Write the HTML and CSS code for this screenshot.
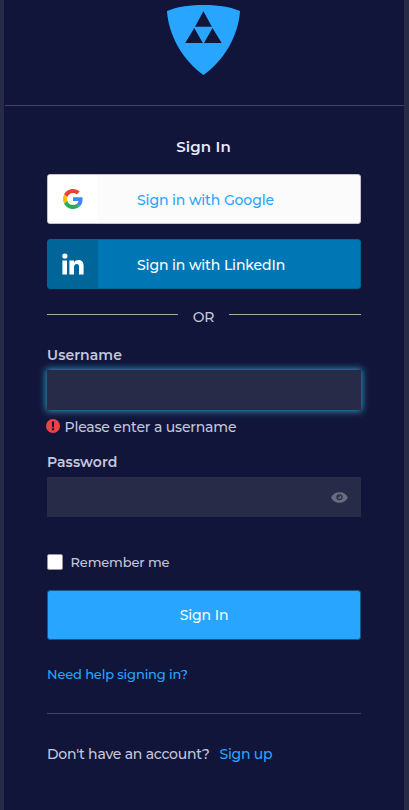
FILE: index.html
```html
<!DOCTYPE html>
<html lang="en">
<head>
<meta charset="utf-8">
<title>Sign In</title>
<link rel="stylesheet" href="styles.css">
</head>
<body>
<main class="panel">
  <header class="brand">
    <svg class="shield" width="74" height="72" viewBox="0 0 74 72"><path fill="#28a5ff" d="M0 7C11 2.300 24 1 36.400 1S62 2.300 73 7C71.500 32 56.500 57 36.400 71C16.500 57 1.500 32 0 7Z"/><path fill="#12153a" d="M36.400 7.300 44.900 22.800H28ZM27.300 24 35.800 39H18.200ZM45.500 24 54.700 39H37Z"/></svg>
  </header>
  <form class="form">
    <h1 class="title">Sign In</h1>
    <button type="button" class="social google">
      <span class="social-icon"><svg width="20" height="20" viewBox="0 0 48 48"><path fill="#ea4335" d="M24 9.500c3.540 0 6.710 1.220 9.210 3.600l6.850-6.850C35.900 2.380 30.470 0 24 0 14.620 0 6.510 5.380 2.560 13.220l7.980 6.190C12.430 13.720 17.740 9.500 24 9.500z"/><path fill="#4285f4" d="M46.980 24.550c0-1.570-.15-3.090-.38-4.550H24v9.020h12.940c-.58 2.960-2.260 5.480-4.780 7.180l7.730 6c4.510-4.180 7.090-10.360 7.090-17.650z"/><path fill="#fbbc05" d="M10.530 28.590a14.500 14.500 0 0 1 0-9.180l-7.980-6.190a24 24 0 0 0 0 21.560l7.980-6.190z"/><path fill="#2bad55" d="M24 48c6.480 0 11.930-2.130 15.890-5.810l-7.730-6c-2.150 1.450-4.920 2.300-8.160 2.300-6.260 0-11.570-4.220-13.470-9.910l-7.980 6.190C6.510 42.620 14.620 48 24 48z"/></svg></span>
      <span class="social-label">Sign in with Google</span>
    </button>
    <button type="button" class="social linkedin">
      <span class="social-icon"><svg width="22" height="22" viewBox="0 0 22 22" fill="#fff"><circle cx="2.900" cy="3" r="2.600"/><path d="M.4 7.500H5V21.400H.4ZM7.400 7.500H12V9.400C13 7.900 14.500 7.100 16.500 7.100C20.200 7.100 21.600 9.500 21.600 13.200V21.400H17V14.100C17 12.100 16.500 10.900 14.800 10.900C13 10.900 12 12.200 12 14.300V21.400H7.400Z"/></svg></span>
      <span class="social-label">Sign in with LinkedIn</span>
    </button>
    <div class="or"><i class="rule"></i><span class="or-text">OR</span><i class="rule"></i></div>
    <label class="label username-label" for="user">Username</label>
    <input class="field focused" id="user" type="text">
    <div class="error"><svg width="14" height="14" viewBox="0 0 14 14"><circle cx="7" cy="7" r="7" fill="#e94444"/><path fill="#12153a" d="M5.800 2.500H8.200L7.900 8.200H6.100ZM5.900 9.200H8.100V11.300H5.900Z"/></svg><span class="error-text">Please enter a username</span></div>
    <label class="label password-label" for="pass">Password</label>
    <div class="password"><input class="field bare" id="pass" type="password"><svg width="17" height="11" viewBox="0 0 16 11" preserveAspectRatio="none"><path fill="#696c7c" d="M0 5.500C1.700 2 4.500.3 8 .3S14.300 2 16 5.500C14.300 9 11.500 10.700 8 10.700S1.700 9 0 5.500Z"/><circle cx="8" cy="5.300" r="2.400" fill="none" stroke="#2a2d49" stroke-width="1.200"/><path fill="#2a2d49" d="M8 3.400V5.400H6C6 4.200 6.800 3.400 8 3.400Z"/></svg></div>
    <label class="remember"><input class="check" type="checkbox"><span class="remember-text">Remember me</span></label>
    <button type="button" class="submit">Sign In</button>
    <a class="help">Need help signing in?</a>
    <div class="signup"><span class="question">Don't have an account?</span><a class="join">Sign up</a></div>
  </form>
</main>
</body>
</html>
```
FILE: styles.css
```css
* { box-sizing: border-box; }
body { margin: 0; background: #282b48; font: 14px/20px "Montserrat", Inter, sans-serif; color: #c3c7dd; }
button { font: inherit; padding: 0; }
.panel { width: 400px; height: 810px; margin-left: 4px; background: #12153a; overflow: hidden; }
.brand { height: 106px; margin-left: 1px; padding: 4px 0 0 162px; border-bottom: 1px solid #41435f; }
.shield { display: block; }
.form { width: 314px; margin-left: 43px; display: flex; flex-direction: column; }
.title { margin: 31px 0 17px; height: 20px; text-align: center; font-size: 15px; line-height: 20px; font-weight: 600; letter-spacing: .15px; color: #e8eafa; padding-right: 1px; }
.social { display: flex; width: 314px; height: 50px; border: 1px solid #c3c3c6; border-radius: 3px; overflow: hidden; align-items: center; }
.social-icon { width: 50px; height: 48px; display: flex; align-items: center; justify-content: center; }
.social-label { margin-left: 39px; white-space: nowrap; padding-top: 2px; }
.google { background: #fbfbfb; color: #28a5ff; font-weight: 500; letter-spacing: -.11px; }
.google .social-icon { background: #fff; }
.linkedin { margin-top: 15px; background: #0077b5; border-color: #006399; color: #fff; font-weight: 500; letter-spacing: -.11px; }
.linkedin .social-icon { background: #006699; }
.or { height: 20px; margin-top: 18px; display: flex; }
.rule { height: 1px; width: 131px; margin-top: 7px; background: #aaa9a8; }
.rule:last-child { width: 132px; }
.or-text { width: 51px; text-align: center; font-weight: 500; letter-spacing: -.2px; }
.label { height: 20px; font-weight: 600; letter-spacing: .08px; }
.username-label { margin: 18px 0 5px; }
.field { width: 314px; height: 40px; border: 0; padding: 0 12px; background: #282b48; color: #fff; outline: 0; font: inherit; }
.focused { box-shadow: 0 0 7px 1px #2c9fc5; }
.error { display: flex; align-items: center; height: 20px; margin: 6px 0 0 -1.5px; gap: 5px; }
.error-text { padding-top: 2px; font-weight: 500; letter-spacing: -.18px; }
.password-label { margin: 16px 0 5px; }
.password { width: 314px; height: 40px; display: flex; align-items: center; background: #282b48; }
.bare { width: 284px; background: transparent; }
.remember { height: 20px; display: flex; align-items: center; margin-top: 35px; gap: 7.5px; font-size: 13px; font-weight: 500; letter-spacing: -.12px; }
.check { appearance: none; width: 16px; height: 16px; margin: 0; background: #fff; border: 1px solid #969697; border-radius: 2px; }
.submit { height: 50px; margin-top: 18px; background: #28a5ff; color: #f4faff; border: 1px solid #0e5b8d; border-radius: 3px; font-weight: 500; letter-spacing: -.11px; }
.help { height: 20px; margin-top: 24px; font-size: 13px; font-weight: 500; letter-spacing: -.14px; color: #28a5ff; }
.signup { margin-top: 29px; border-top: 1px solid #41435f; padding-top: 30px; display: flex; gap: 10px; white-space: nowrap; font-weight: 500; letter-spacing: -.23px; }
.join { color: #28a5ff; }
```
